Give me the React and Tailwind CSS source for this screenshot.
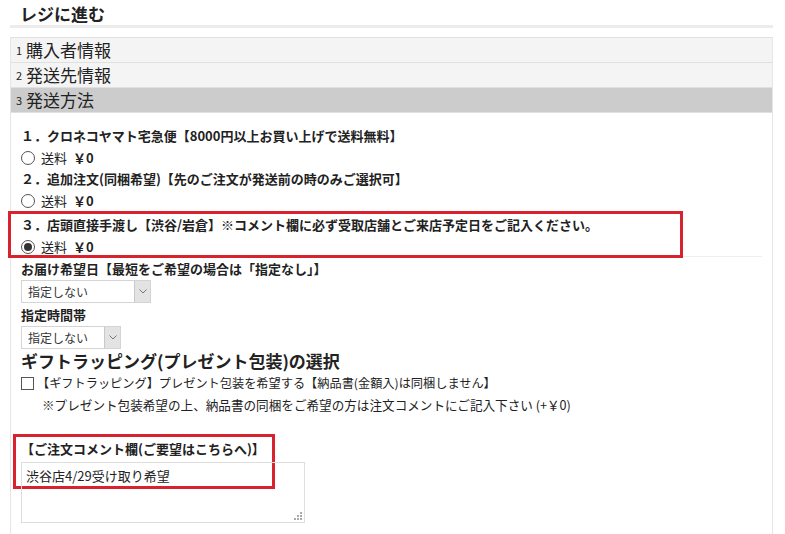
import React from "react";

const font = { fontFamily: '"Noto Sans CJK JP", "Noto Sans", sans-serif' };

function Radio({ checked }) {
  return (
    <span className="inline-flex w-[14px] h-[14px] rounded-full border border-[#555] bg-white items-center justify-center mr-[6px]">
      {checked && <span className="w-[8px] h-[8px] rounded-full bg-[#333]" />}
    </span>
  );
}

function FeeRow({ checked }) {
  return (
    <div className="h-[21px] flex items-center text-[13px] text-[#222]">
      <Radio checked={checked} />
      <span>送料</span>
      <span className="ml-[6px] font-bold">￥0</span>
    </div>
  );
}

function Select({ width }) {
  return (
    <div className={`flex h-[23px] border border-[#d4d4d4] bg-white ${width}`}>
      <div className="flex-1 flex items-center pl-[6px] text-[12px] text-[#333]">指定しない</div>
      <div className="w-[16px] h-full bg-[#e3e3e3] border-l border-[#c8c8c8] flex items-center justify-center">
        <svg width="8" height="5" viewBox="0 0 8 5">
          <path d="M0.5 0.5 L4 4 L7.5 0.5" fill="none" stroke="#777" strokeWidth="1" />
        </svg>
      </div>
    </div>
  );
}

export default function App() {
  return (
    <div className="w-[785px] h-[534px] bg-white overflow-hidden text-[#222]" style={font}>
      {/* 見出し */}
      <div className="pl-[20px] pt-[3px] h-[25px] text-[17px] font-bold leading-[21px]">レジに進む</div>
      <div className="ml-[10px] w-[763px] h-[3px] bg-[#ececec]" />

      <div className="ml-[10px] w-[763px] mt-[9px] border-l border-r border-[#e6e6e6]">
        {/* ステップ */}
        <div className="h-[26px] flex items-center bg-[#f4f4f4] border-t border-b border-[#e0e0e0] pl-[5px]">
          <span className="text-[11px] mr-[4px]">1</span>
          <span className="text-[17px]">購入者情報</span>
        </div>
        <div className="h-[25px] flex items-center bg-[#f4f4f4] border-b border-[#e0e0e0] pl-[5px]">
          <span className="text-[11px] mr-[4px]">2</span>
          <span className="text-[17px]">発送先情報</span>
        </div>
        <div className="h-[25px] flex items-center bg-[#cccccc] border-b border-[#e0e0e0] pl-[5px]">
          <span className="text-[11px] mr-[4px]">3</span>
          <span className="text-[17px]">発送方法</span>
        </div>

        {/* 発送方法 */}
        <div className="pt-[12px] pl-[10px] pb-[60px]">
          <div className="h-[22px] flex items-center text-[13px] font-bold">１．クロネコヤマト宅急便【8000円以上お買い上げで送料無料】</div>
          <FeeRow />
          <div className="h-[22px] flex items-center text-[13px] font-bold">２．追加注文(同梱希望)【先のご注文が発送前の時のみご選択可】</div>
          <FeeRow />
          <div className="relative">
            <div className="absolute left-[0px] right-[10px] bottom-[1px] h-[1px] bg-[#eeeeee]" />
            <div className="relative ml-[-13px] w-[675px] border-[3px] border-[#d8232e] pl-[10px] h-[47px]">
              <div className="h-[22px] flex items-center text-[13px] font-bold">３．店頭直接手渡し【渋谷/岩倉】※コメント欄に必ず受取店舗とご来店予定日をご記入ください。</div>
              <FeeRow checked />
            </div>
          </div>

          <div className="h-[22px] flex items-center text-[13px] font-bold">お届け希望日【最短をご希望の場合は「指定なし」】</div>
          <Select width="w-[130px]" />
          <div className="h-[23px] flex items-center text-[13px] font-bold">指定時間帯</div>
          <Select width="w-[100px]" />
          <div className="h-[23px] flex items-center text-[17px] font-bold">ギフトラッピング(プレゼント包装)の選択</div>
          <div className="h-[22px] flex items-center text-[12.2px]">
            <span className="inline-block w-[13px] h-[13px] border border-[#555] bg-white mr-[3px]" />
            【ギフトラッピング】プレゼント包装を希望する【納品書(金額入)は同梱しません】
          </div>
          <div className="h-[22px] flex items-center text-[12.6px] pl-[21px]">※プレゼント包装希望の上、納品書の同梱をご希望の方は注文コメントにご記入下さい (+￥0)</div>

          {/* コメント */}
          <div className="relative mt-[18px]">
            <div className="ml-[-8px] w-[262px] h-[55px] border-[3px] border-[#d8232e]" />
            <div className="absolute left-0 top-[5px] h-[20px] flex items-center text-[13px] font-bold">【ご注文コメント欄(ご要望はこちらへ)】</div>
            <div className="absolute left-0 top-[28px] w-[284px] h-[61px] border border-[#dedede] pl-[4px] pt-[3px]">
              <div className="text-[13px] leading-[20px]">渋谷店4/29受け取り希望</div>
              <svg className="absolute right-[2px] bottom-[2px]" width="8" height="8" viewBox="0 0 8 8">
                <rect x="6" y="0" width="2" height="2" fill="#aaa" />
                <rect x="3" y="3" width="2" height="2" fill="#aaa" />
                <rect x="6" y="3" width="2" height="2" fill="#aaa" />
                <rect x="0" y="6" width="2" height="2" fill="#aaa" />
                <rect x="3" y="6" width="2" height="2" fill="#aaa" />
                <rect x="6" y="6" width="2" height="2" fill="#aaa" />
              </svg>
            </div>
          </div>
        </div>
      </div>
    </div>
  );
}
